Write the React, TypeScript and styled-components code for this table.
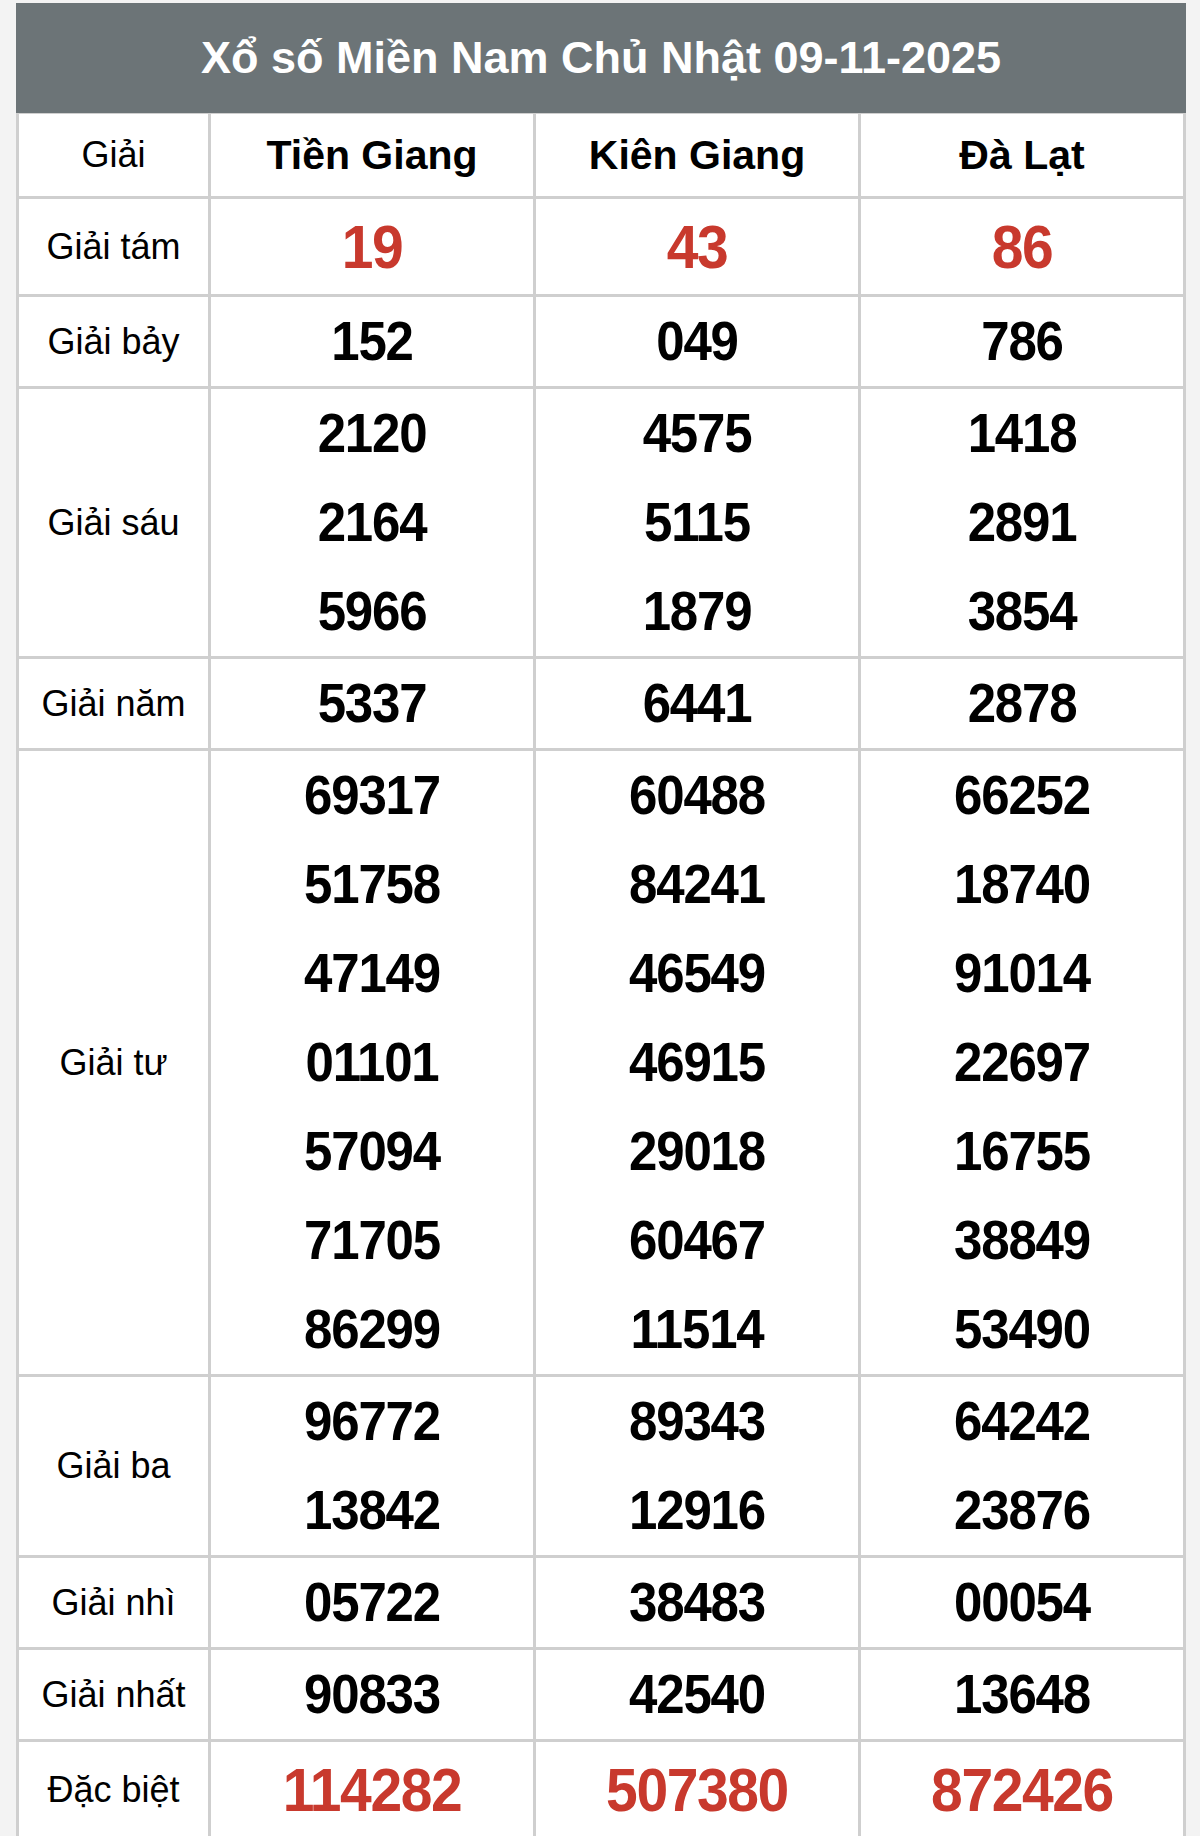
import { Fragment } from "react";
import styled, { createGlobalStyle } from "styled-components";

const GlobalStyle = createGlobalStyle`
  html, body {
    margin: 0;
    padding: 0;
    background: #f3f3f3;
  }
  body {
    font-family: "Liberation Sans", Arial, sans-serif;
  }
`;

const Page = styled.div`
    padding: 3px 14px 0 16px;
`;

const Board = styled.div`
    width: 1170px;
`;

const Title = styled.h1`
    margin: 0;
    height: 110px;
    display: flex;
    align-items: center;
    justify-content: center;
    background-color: #6c7477;
    color: #ffffff;
    font-size: 45px;
    font-weight: 700;
`;

const Grid = styled.div`
    display: grid;
    grid-template-columns: 189px 1fr 1fr 1fr;
    gap: 3px;
    padding: 1px 3px 3px 3px;
    background-color: #cfcfcf;
`;

const HeadCell = styled.div<{ bold?: boolean }>`
    height: 82px;
    display: flex;
    align-items: center;
    justify-content: center;
    background-color: #ffffff;
    color: #000;
    font-size: ${(props) => (props.bold ? "41px" : "36px")};
    font-weight: ${(props) => (props.bold ? 700 : 400)};
`;

const LabelCell = styled.div`
    display: flex;
    align-items: center;
    justify-content: center;
    background-color: #ffffff;
    color: #000;
    font-size: 36px;
`;

const NumberCell = styled.div`
    display: flex;
    flex-direction: column;
    align-items: center;
    background-color: #ffffff;
`;

const Num = styled.span<{ special?: boolean }>`
    display: block;
    line-height: ${(props) => (props.special ? "95px" : "89px")};
    font-size: ${(props) => (props.special ? "57px" : "51px")};
    letter-spacing: ${(props) => (props.special ? "-1.4px" : "-1.2px")};
    font-weight: 700;
    transform: scaleY(1.08);
    color: ${(props) => (props.special ? "#c8392d" : "#000")};
`;

interface Prize {
    name: string;
    special?: boolean;
    results: string[][];
}

const provinces = ["Tiền Giang", "Kiên Giang", "Đà Lạt"];

const prizes: Prize[] = [
    { name: "Giải tám", special: true, results: [["19"], ["43"], ["86"]] },
    { name: "Giải bảy", results: [["152"], ["049"], ["786"]] },
    {
        name: "Giải sáu",
        results: [
            ["2120", "2164", "5966"],
            ["4575", "5115", "1879"],
            ["1418", "2891", "3854"],
        ],
    },
    { name: "Giải năm", results: [["5337"], ["6441"], ["2878"]] },
    {
        name: "Giải tư",
        results: [
            ["69317", "51758", "47149", "01101", "57094", "71705", "86299"],
            ["60488", "84241", "46549", "46915", "29018", "60467", "11514"],
            ["66252", "18740", "91014", "22697", "16755", "38849", "53490"],
        ],
    },
    {
        name: "Giải ba",
        results: [
            ["96772", "13842"],
            ["89343", "12916"],
            ["64242", "23876"],
        ],
    },
    { name: "Giải nhì", results: [["05722"], ["38483"], ["00054"]] },
    { name: "Giải nhất", results: [["90833"], ["42540"], ["13648"]] },
    { name: "Đặc biệt", special: true, results: [["114282"], ["507380"], ["872426"]] },
];

function App() {
    return (
        <>
            <GlobalStyle />
            <Page>
                <Board>
                    <Title>Xổ số Miền Nam Chủ Nhật 09-11-2025</Title>
                    <Grid>
                        <HeadCell>Giải</HeadCell>
                        {provinces.map((p) => (
                            <HeadCell bold key={p}>{p}</HeadCell>
                        ))}
                        {prizes.map((prize) => (
                            <Fragment key={prize.name}>
                                <LabelCell>{prize.name}</LabelCell>
                                {prize.results.map((list, i) => (
                                    <NumberCell key={i}>
                                        {list.map((n, j) => (
                                            <Num special={prize.special} key={j}>{n}</Num>
                                        ))}
                                    </NumberCell>
                                ))}
                            </Fragment>
                        ))}
                    </Grid>
                </Board>
            </Page>
        </>
    );
}

export default App;
